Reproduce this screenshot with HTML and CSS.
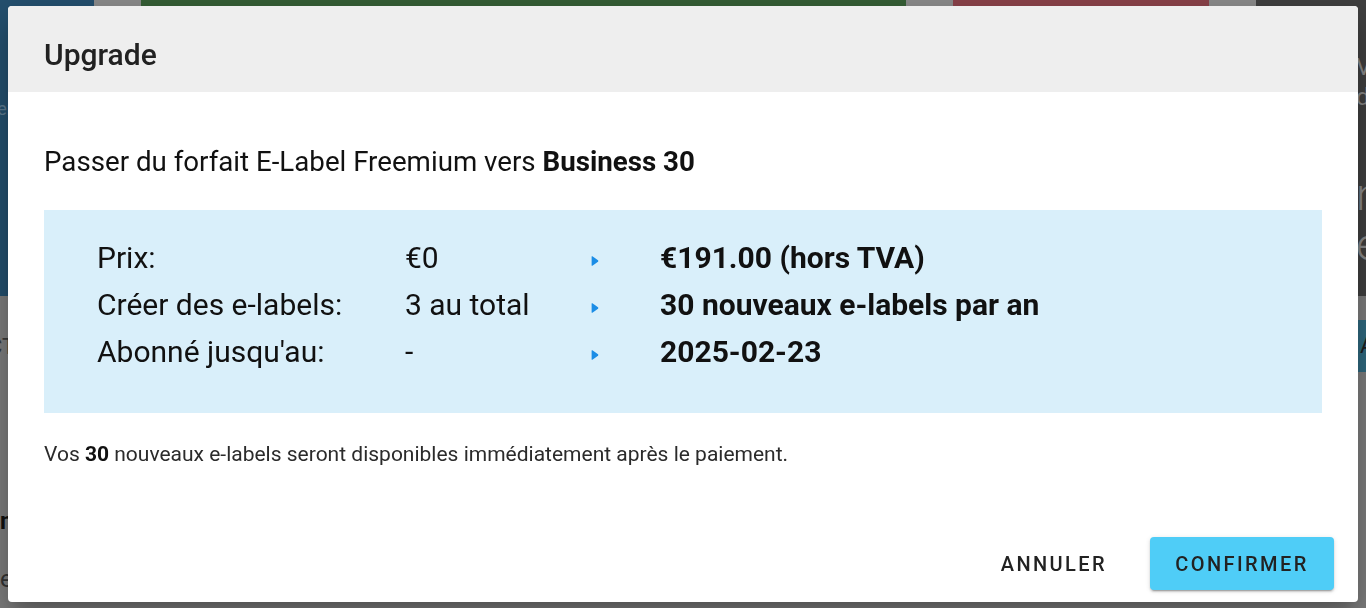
FILE: index.html
```html
<!DOCTYPE html>
<html lang="fr">
<head>
    <meta charset="UTF-8">
    <meta name="viewport" content="width=device-width, initial-scale=1.0">
    <title>Upgrade</title>
    <link rel="stylesheet" href="styles.css">
</head>
<body>
    <!-- page behind the dialog (already dimmed) -->
    <div class="page">
        <div class="tiles">
            <div class="tile tile-blue"><span class="faint">Abonnement</span></div>
            <div class="tile-gap"></div>
            <div class="tile tile-green"></div>
            <div class="tile-gap"></div>
            <div class="tile tile-red"></div>
            <div class="tile-gap"></div>
            <div class="tile tile-dark">
                <span class="small">Vos</span>
                <span class="small">de</span>
                <span class="big big-first">n</span>
                <span class="big">e</span>
            </div>
        </div>
        <div class="page-row">
            <span class="page-tab">CT</span>
            <span class="page-btn">A</span>
        </div>
        <div class="page-lower">
            <strong>n</strong>
            <span>e</span>
        </div>
    </div>

    <div class="dialog">
        <div class="dialog-title">Upgrade</div>
        <div class="dialog-body">
            <p class="intro">Passer du forfait E-Label Freemium vers <strong>Business 30</strong></p>

            <div class="summary">
                <div class="summary-row">
                    <span>Prix:</span>
                    <span>€0</span>
                    <span class="arrow"><svg width="8" height="12" viewBox="0 0 8 12"><path d="M1.4 1.3 L7 5.3 Q7.8 6 7 6.7 L1.4 10.7 Q0.6 11.1 0.6 10.2 V1.8 Q0.6 0.9 1.4 1.3Z" fill="#1b8de6"/></svg></span>
                    <strong>€191.00 (hors TVA)</strong>
                </div>
                <div class="summary-row">
                    <span>Créer des e-labels:</span>
                    <span>3 au total</span>
                    <span class="arrow"><svg width="8" height="12" viewBox="0 0 8 12"><path d="M1.4 1.3 L7 5.3 Q7.8 6 7 6.7 L1.4 10.7 Q0.6 11.1 0.6 10.2 V1.8 Q0.6 0.9 1.4 1.3Z" fill="#1b8de6"/></svg></span>
                    <strong>30 nouveaux e-labels par an</strong>
                </div>
                <div class="summary-row">
                    <span>Abonné jusqu'au:</span>
                    <span>-</span>
                    <span class="arrow"><svg width="8" height="12" viewBox="0 0 8 12"><path d="M1.4 1.3 L7 5.3 Q7.8 6 7 6.7 L1.4 10.7 Q0.6 11.1 0.6 10.2 V1.8 Q0.6 0.9 1.4 1.3Z" fill="#1b8de6"/></svg></span>
                    <strong>2025-02-23</strong>
                </div>
            </div>

            <p class="note">Vos <strong>30</strong> nouveaux e-labels seront disponibles immédiatement après le paiement.</p>
        </div>
        <div class="dialog-actions">
            <button class="btn-text">Annuler</button>
            <button class="btn-primary">Confirmer</button>
        </div>
    </div>
</body>
</html>
```

FILE: styles.css
```css
body {
    margin: 0;
    font-family: Roboto, "Liberation Sans", sans-serif;
    background-color: #7e7e7e;
    height: 608px;
    overflow: hidden;
}

/* background page */
.tiles {
    display: grid;
    grid-template-columns: 94px 47px 765px 47px 256px 47px 110px;
    height: 296px;
}
.tile-gap {
    background-color: #8c8c8c;
}
.tile-blue {
    background-color: #24506f;
    padding-top: 98px;
}
.tile-green {
    background-color: #365f36;
}
.tile-red {
    background-color: #8b424a;
}
.tile-dark {
    background-color: #404040;
    display: flex;
    flex-direction: column;
    padding-left: 100px;
    padding-top: 52px;
    color: #8a8a8a;
}
.faint {
    color: #5f7d92;
    font-size: 18px;
    margin-left: -80px;
}
.small {
    font-size: 24px;
    line-height: 30px;
}
.big {
    font-size: 44px;
    line-height: 50px;
    font-weight: 300;
}
.big-first {
    margin-top: 58px;
}
.page-row {
    display: flex;
    justify-content: space-between;
    align-items: center;
    height: 76px;
    padding-top: 24px;
    box-sizing: border-box;
}
.page-tab {
    color: #3a3a3a;
    font-size: 22px;
    margin-left: -12px;
}
.page-btn {
    background-color: #2f6a80;
    color: #1e1e1e;
    font-size: 22px;
    width: 20px;
    height: 52px;
    line-height: 52px;
    padding-left: 3px;
    box-sizing: border-box;
    margin-right: -11px;
}
.page-lower {
    display: flex;
    flex-direction: column;
    padding-top: 120px;
    font-size: 24px;
    color: #333;
    line-height: 58px;
}
.page-lower strong {
    color: #111;
}

/* dialog */
.dialog {
    position: fixed;
    left: 8px;
    top: 6px;
    width: 1350px;
    height: 596px;
    background-color: #fff;
    border-radius: 4px;
    overflow: hidden;
    display: flex;
    flex-direction: column;
    box-shadow: 0 11px 15px -7px rgba(0,0,0,0.2), 0 24px 38px 3px rgba(0,0,0,0.14), 0 9px 46px 8px rgba(0,0,0,0.12);
}
.dialog-title {
    height: 86px;
    box-sizing: border-box;
    background-color: #eeeeee;
    padding: 10px 36px 0;
    display: flex;
    align-items: center;
    font-size: 30px;
    font-weight: 500;
    color: #212121;
}
.dialog-body {
    flex: 1;
    padding: 0 36px;
    color: #111;
}
.intro {
    margin: 54px 0 32px;
    font-size: 27.7px;
    line-height: 32px;
}
.summary {
    background-color: #d9effa;
    height: 203px;
    box-sizing: border-box;
    padding: 24px 53px;
}
.summary-row {
    display: grid;
    grid-template-columns: 308px 186px 69px auto;
    align-items: center;
    height: 47px;
    font-size: 30px;
}
.arrow {
    display: flex;
    padding-top: 6px;
}
.note {
    margin: 29px 0 0;
    font-size: 21px;
    line-height: 24px;
    color: #2b2b2b;
}
.note strong {
    color: #111;
}
.dialog-actions {
    display: flex;
    justify-content: flex-end;
    align-items: center;
    gap: 27px;
    padding: 0 24px 12px;
}
button {
    font-family: Roboto, "Liberation Sans", sans-serif;
    font-size: 20px;
    font-weight: 500;
    letter-spacing: 2.4px;
    text-transform: uppercase;
    color: #222;
    border: none;
    border-radius: 4px;
    height: 53px;
    cursor: pointer;
}
.btn-text {
    background: none;
    padding: 0 16px;
}
.btn-primary {
    background-color: #4fcdf7;
    width: 184px;
    box-shadow: 0 3px 1px -2px rgba(0,0,0,0.2), 0 2px 2px 0 rgba(0,0,0,0.14), 0 1px 5px 0 rgba(0,0,0,0.12);
}
```
